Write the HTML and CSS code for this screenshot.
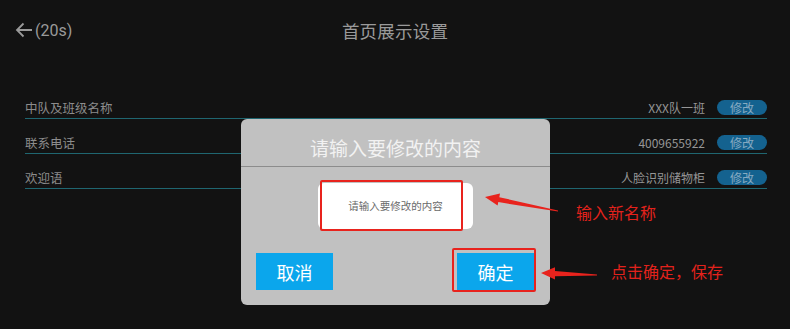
FILE: index.html
```html
<!DOCTYPE html>
<html lang="zh-CN">
<head>
    <meta charset="UTF-8">
    <meta name="viewport" content="width=device-width, initial-scale=1.0">
    <title>首页展示设置</title>
    <link rel="stylesheet" href="styles.css">
</head>
<body>

<div class="screen">
    <header class="topbar">
        <div class="back">
            <svg class="back-icon" width="18" height="16" viewBox="0 0 18 16">
                <path d="M17 8H2M8.5 1.5L2 8l6.5 6.5" fill="none" stroke="#9a9a9a" stroke-width="1.8"/>
            </svg>
            <span>(20s)</span>
        </div>
        <div class="title">首页展示设置</div>
        <div></div>
    </header>

    <div class="settings">
        <div class="row">
            <span class="label">中队及班级名称</span>
            <span class="value">XXX队一班</span>
            <button class="edit">修改</button>
        </div>
        <div class="row">
            <span class="label">联系电话</span>
            <span class="value">4009655922</span>
            <button class="edit">修改</button>
        </div>
        <div class="row">
            <span class="label">欢迎语</span>
            <span class="value">人脸识别储物柜</span>
            <button class="edit">修改</button>
        </div>
    </div>

    <!-- edit dialog -->
    <div class="dialog">
        <div class="dialog-title">请输入要修改的内容</div>
        <div class="dialog-body">
            <div class="input-box">请输入要修改的内容</div>
        </div>
        <div class="dialog-actions">
            <button class="btn">取消</button>
            <button class="btn">确定</button>
        </div>
    </div>

    <!-- annotations -->
    <div class="mark mark-input"></div>
    <div class="mark mark-ok"></div>
    <svg class="arrows" width="790" height="329" viewBox="0 0 790 329">
        <polygon fill="#e8231d" points="485,197 500,193.5 499.3,197.2 558,210.4 558,211.6 498.3,202.1 497.6,205.6"/>
        <polygon fill="#e8231d" points="541,273 555,267.2 555,271 597,274.4 597,275.6 555,276.2 555,279.6"/>
    </svg>
    <div class="note note-input">输入新名称</div>
    <div class="note note-ok">点击确定，保存</div>
</div>

</body>
</html>
```

FILE: styles.css
```css
body {
    margin: 0;
    padding: 0;
    background-color: #121212;
    font-family: Roboto, "Noto Sans CJK SC", sans-serif;
}
.screen {
    position: relative;
    width: 790px;
    height: 329px;
    overflow: hidden;
    background-color: #121212;
}
.topbar {
    display: grid;
    grid-template-columns: 1fr auto 1fr;
    align-items: center;
    height: 60px;
    padding: 0 15px;
    color: #9a9a9a;
}
.back {
    display: flex;
    align-items: center;
    gap: 2px;
    font-size: 16px;
}
.back-icon {
    display: block;
}
.title {
    font-family: "Noto Sans CJK SC", sans-serif;
    font-size: 17.5px;
    letter-spacing: 0.2px;
}
.settings {
    padding: 24px 23px 0 25px;
}
.row {
    display: flex;
    align-items: flex-end;
    height: 34px;
    border-bottom: 1px solid #1f6670;
    font-family: "Noto Sans CJK SC", sans-serif;
    font-size: 12.5px;
    color: #8c8c8c;
}
.row .label {
    flex: 1;
    line-height: 20px;
}
.row .value {
    line-height: 20px;
    margin-right: 12px;
    font-size: 12px;
    color: #969696;
}
.edit {
    width: 50px;
    height: 15px;
    margin-bottom: 3px;
    padding: 0;
    border: none;
    border-radius: 8px;
    background-color: #14628f;
    color: #86aac2;
    font-family: "Noto Sans CJK SC", sans-serif;
    font-size: 12px;
    line-height: 15px;
}
.dialog {
    position: absolute;
    left: 241px;
    top: 119px;
    width: 309px;
    height: 186px;
    background-color: #c1c1c1;
    border-radius: 6px;
    font-family: "Noto Sans CJK SC", sans-serif;
}
.dialog-title {
    height: 47px;
    line-height: 58px;
    border-bottom: 1px solid #8c8c8c;
    text-align: center;
    color: #f2f2f2;
    font-size: 19px;
}
.dialog-body {
    display: flex;
    justify-content: center;
    padding-top: 16px;
}
.input-box {
    width: 155px;
    height: 46px;
    line-height: 46px;
    background-color: #ffffff;
    border-radius: 6px;
    text-align: center;
    color: #6a6a6a;
    font-size: 10.5px;
}
.dialog-actions {
    display: flex;
    justify-content: space-between;
    padding: 24px 16px 0 15px;
}
.btn {
    width: 77px;
    height: 37px;
    padding: 0;
    border: none;
    background-color: #0ba6ec;
    color: #ffffff;
    font-family: "Noto Sans CJK SC", sans-serif;
    font-size: 18px;
}
.mark {
    position: absolute;
    border: 2px solid #e8231d;
    border-radius: 2px;
}
.mark-input {
    left: 320px;
    top: 180px;
    width: 139px;
    height: 47px;
}
.mark-ok {
    left: 452px;
    top: 248px;
    width: 80px;
    height: 40px;
}
.arrows {
    position: absolute;
    left: 0;
    top: 0;
}
.note {
    position: absolute;
    color: #e3221c;
    font-family: "Noto Sans CJK SC", sans-serif;
    font-size: 16px;
    line-height: 20px;
}
.note-input {
    left: 576px;
    top: 202px;
}
.note-ok {
    left: 611px;
    top: 261px;
}
```
